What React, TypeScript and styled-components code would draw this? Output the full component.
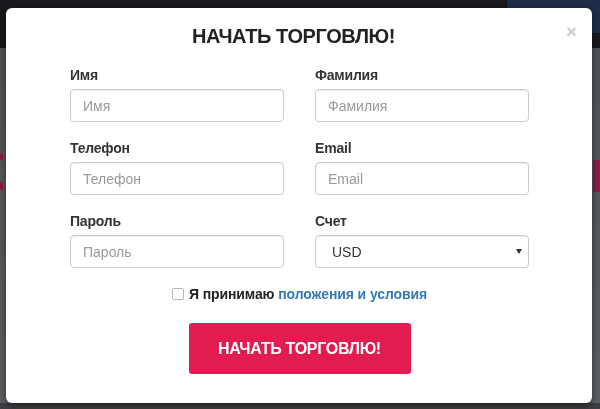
import React from "react";
import styled, { createGlobalStyle } from "styled-components";

const GlobalStyle = createGlobalStyle`
  html, body {
    margin: 0;
    padding: 0;
  }
  body {
    font-family: "Liberation Sans", Arial, sans-serif;
    background: #55595d;
    overflow: hidden;
  }
  * {
    box-sizing: border-box;
  }
`;

// dimmed page behind the modal
const Page = styled.div`
  height: 409px;
  display: flex;
  flex-direction: column;
`;

const TopBar = styled.div`
  height: 48px;
  background: #17191d;
  display: flex;
  justify-content: flex-end;
  align-items: flex-start;
`;

const TopBarAccount = styled.div`
  width: 93px;
  height: 33px;
  background: #1f2d4b;
`;

const PageBody = styled.div`
  flex: 1;
  background:
    linear-gradient(#8c1f49, #8c1f49) 0 105px / 3px 7px no-repeat,
    linear-gradient(#8c1f49, #8c1f49) 0 134px / 3px 8px no-repeat,
    linear-gradient(#8c1f49, #8c1f49) 100% 112px / 7px 32px no-repeat,
    linear-gradient(#505458, #5e6165);
`;

const PageFooter = styled.div`
  height: 6px;
  background: #3f4043;
`;

const Backdrop = styled.div`
  position: fixed;
  inset: 0;
  padding: 8px 8px 6px 6px;
  display: flex;
`;

const Modal = styled.div`
  flex: 1;
  background: #fff;
  border-radius: 6px;
  box-shadow: 0 3px 9px rgba(0, 0, 0, 0.5);
  display: flex;
  flex-direction: column;
`;

const ModalHeader = styled.div`
  display: flex;
  align-items: flex-start;
  padding: 15px;
`;

const Title = styled.h2`
  flex: 1;
  margin: 0;
  font-size: 20px;
  letter-spacing: -0.4px;
  line-height: 26px;
  font-weight: 700;
  color: #222;
  text-align: center;
`;

const CloseButton = styled.button`
  margin-top: -1px;
  border: none;
  background: none;
  padding: 0;
  font-family: inherit;
  font-size: 19px;
  font-weight: 700;
  line-height: 1;
  color: #000;
  opacity: 0.2;
  cursor: pointer;
`;

const ModalBody = styled.div`
  padding: 1px 63px 0 64px;
`;

const FormGrid = styled.div`
  display: grid;
  grid-template-columns: 1fr 1fr;
  column-gap: 31px;
`;

const FormGroup = styled.div`
  margin-bottom: 16px;
`;

const Label = styled.label`
  display: block;
  margin-bottom: 4px;
  font-size: 14px;
  letter-spacing: -0.2px;
  line-height: 20px;
  font-weight: 700;
  color: #333;
`;

const Input = styled.input`
  display: block;
  width: 100%;
  height: 33px;
  padding: 0 12px;
  border: 1px solid #ccc;
  border-radius: 4px;
  box-shadow: inset 0 1px 1px rgba(0, 0, 0, 0.075);
  font-family: inherit;
  font-size: 14px;
  color: #555;
  background: #fff;
  outline: none;

  &::placeholder {
    color: #9a9a9a;
  }
`;

const SelectWrap = styled.div`
  position: relative;

  &::after {
    content: "";
    position: absolute;
    right: 7px;
    top: 14px;
    border-left: 3px solid transparent;
    border-right: 3px solid transparent;
    border-top: 5px solid #333;
  }
`;

const Select = styled.select`
  display: block;
  width: 100%;
  height: 33px;
  padding: 0 16px;
  border: 1px solid #ccc;
  border-radius: 4px;
  box-shadow: inset 0 1px 1px rgba(0, 0, 0, 0.075);
  font-family: inherit;
  font-size: 14px;
  color: #333;
  background: #fff;
  appearance: none;
  outline: none;
`;

const TermsRow = styled.div`
  display: flex;
  justify-content: center;
  align-items: center;
  gap: 5px;
  font-size: 14px;
  letter-spacing: -0.1px;
  line-height: 20px;
  font-weight: 700;
  color: #222;
`;

const Checkbox = styled.input`
  appearance: none;
  margin: 0;
  width: 12px;
  height: 12px;
  border: 1px solid #b8b8b8;
  border-radius: 2px;
  background: #fff;
`;

const TermsLink = styled.a`
  color: #337ab7;
  text-decoration: none;
`;

const SubmitButton = styled.button`
  display: block;
  width: 222px;
  height: 51px;
  margin: 19px auto 0;
  border: none;
  border-radius: 3px;
  background: #e21b50;
  color: #fff;
  font-family: inherit;
  font-size: 16px;
  letter-spacing: -0.3px;
  font-weight: 700;
  cursor: pointer;
`;

const fields = [
  { name: "Имя" },
  { name: "Фамилия" },
  { name: "Телефон" },
  { name: "Email" },
  { name: "Пароль", type: "password" },
];

const App = () => {
  return (
    <React.Fragment>
      <GlobalStyle />
      <Page>
        <TopBar>
          <TopBarAccount />
        </TopBar>
        <PageBody />
        <PageFooter />
      </Page>

      <Backdrop>
        <Modal>
          <ModalHeader>
            <Title>НАЧАТЬ ТОРГОВЛЮ!</Title>
            <CloseButton>×</CloseButton>
          </ModalHeader>
          <ModalBody>
            <FormGrid>
              {fields.map((f) => (
                <FormGroup key={f.name}>
                  <Label>{f.name}</Label>
                  <Input type={f.type || "text"} placeholder={f.name} />
                </FormGroup>
              ))}
              <FormGroup>
                <Label>Счет</Label>
                <SelectWrap>
                  <Select defaultValue="USD">
                    <option>USD</option>
                    <option>EUR</option>
                  </Select>
                </SelectWrap>
              </FormGroup>
            </FormGrid>
            <TermsRow>
              <Checkbox type="checkbox" />
              <span>
                Я принимаю <TermsLink href="#">положения и условия</TermsLink>
              </span>
            </TermsRow>
            <SubmitButton>НАЧАТЬ ТОРГОВЛЮ!</SubmitButton>
          </ModalBody>
        </Modal>
      </Backdrop>
    </React.Fragment>
  );
};

export default App;
